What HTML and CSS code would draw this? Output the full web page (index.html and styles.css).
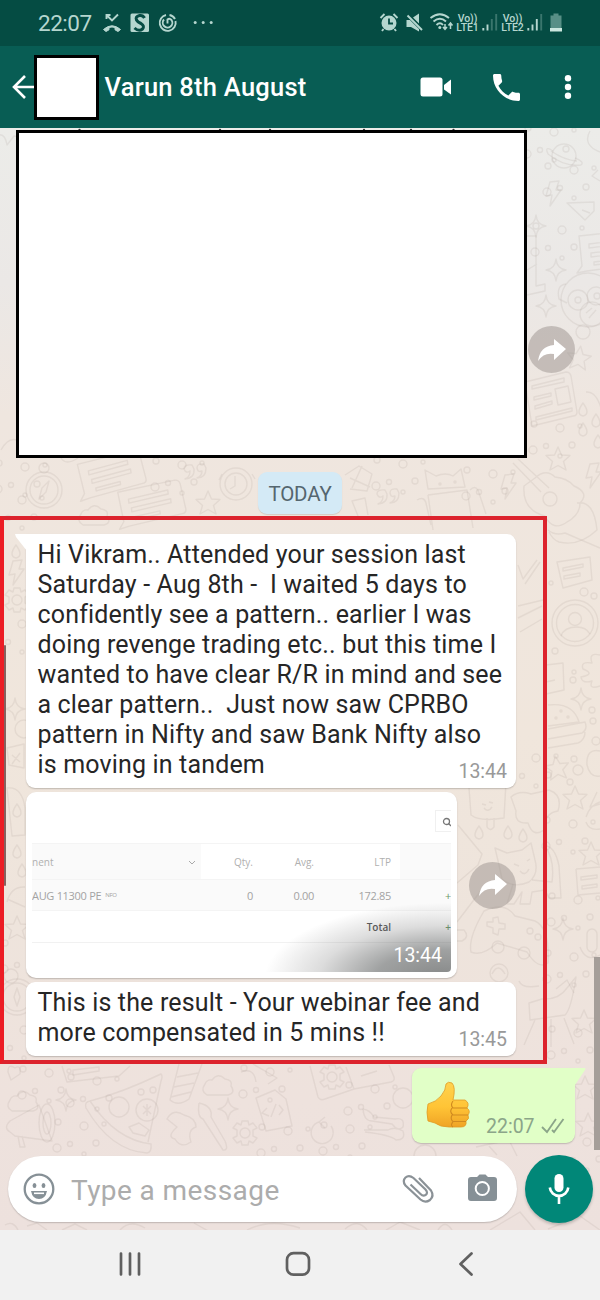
FILE: index.html
```html
<!DOCTYPE html>
<html lang="en">
<head>
<meta charset="utf-8">
<title>Varun 8th August</title>
<link rel="stylesheet" href="styles.css">
</head>
<body>
<div class="phone">
  <header class="status">
    <span class="clock">22:07</span>
    <svg class="missed" width="18" height="20" viewBox="103 13 18 20"><path d="M103.5 29.5Q112 22 120.500 29.500L118 31.500L115 29.800V27.500Q112 26.500 109 27.500V29.800L106 31.500Z" fill="currentColor" stroke="currentColor" stroke-linejoin="round"/><path d="M106.500 19V15H110.500M107 15.500L112 20.500L118 14.500" class="line"/></svg>
    <svg class="snote" width="19" height="20" viewBox="130 13 19 20"><rect x="130.500" y="13.500" width="18.500" height="18.500" rx="1.500" fill="currentColor"/><path d="M144.500 18Q143 15 139.500 15.500Q135 16.500 136.500 20Q137.500 22 141 23.500Q145 26 142.500 29Q139 32 134.500 28" fill="none" stroke="#064c44" stroke-width="3"/></svg>
    <svg class="swirl" width="18" height="20" viewBox="159 13 18 20"><g class="line"><path d="M166 15A8 8 0 1 0 175.500 21"/><path d="M169.500 15A8 8 0 0 1 175 19"/><path d="M164 19.500A4.800 4.800 0 1 0 171.500 20Q169.500 17.800 167.500 19.500V23.500"/></g></svg>
    <svg class="more" width="20" height="20" viewBox="193 13 20 20"><g fill="currentColor"><circle cx="195.200" cy="22.500" r="1.500"/><circle cx="203.200" cy="22.500" r="1.500"/><circle cx="211.200" cy="22.500" r="1.500"/></g></svg>
    <div class="radios">
      <svg width="18" height="20" viewBox="379 13 18 20"><path d="M379.500 18L383.500 14M396.500 18L392.500 14M382.500 29L381 31M393.500 29L395 31" class="line"/><circle cx="388" cy="23" r="7.500" fill="currentColor"/><path d="M388 18.500V23.500H392" fill="none" stroke="#064c44" stroke-width="1.800"/></svg>
      <svg class="mute" width="18" height="20" viewBox="405 13 18 20"><path d="M405.500 20H409L418 29V31.500L410 27H405.500Z" fill="currentColor"/><path d="M412 17.500L418 13.500V23.500Z" fill="currentColor"/><path d="M406.500 15.500L421 30" class="line"/></svg>
      <svg class="wifi" width="23" height="20" viewBox="429 13 23 20"><g class="line"><path d="M429.500 18Q439 10.500 448 18M432.500 21.500Q439 16 445 21.500M435.500 25Q439 21.500 442 25"/><path d="M444 24V29M442 27L444 29.300L446 27M449.500 29V23.500M447.500 25.500L449.500 23L451.500 25.500" stroke-width="1.500"/></g><circle cx="438.800" cy="27.500" r="1.500" fill="currentColor"/></svg>
      <span class="lte"><span>Vo))</span><span>LTE1</span></span>
      <svg class="bars" width="16" height="20" viewBox="481 13 16 20"><path d="M482.300 28V30.500M486.500 24.500V30.500" class="bar"/><path d="M490.800 19V30.500M495.200 14V30.500" class="bar dim"/></svg>
      <span class="lte"><span>Vo))</span><span>LTE2</span></span>
      <svg class="bars" width="16" height="20" viewBox="481 13 16 20"><path d="M482.300 28V30.500M486.500 24.500V30.500M490.800 19V30.500" class="bar"/><path d="M495.200 14V30.500" class="bar dim"/></svg>
      <svg class="battery" width="12" height="20" viewBox="550 13 12 20"><path d="M553.500 13.500H558.500V15.500H561.500V28H550.500V15.500H553.500Z" fill="#588f86"/><path d="M550 28H562V31.500H550Z" fill="#cce7df"/></svg>
    </div>
  </header>

  <header class="appbar">
    <svg class="back" width="22" height="26" viewBox="12 74 22 26"><path d="M34 87H14M25 76L14 87L25 98" fill="none" stroke="#fff" stroke-width="2.600"/></svg>
    <div class="avatar"></div>
    <h1 class="name">Varun 8th August</h1>
    <svg class="video" width="31" height="20" viewBox="420 77 31 20"><rect x="420.500" y="77.500" width="22" height="19" rx="2.500" fill="#fff"/><path d="M444 85L451 79.500V94.500L444 89.500Z" fill="#fff"/></svg>
    <svg class="call" width="27" height="27" viewBox="3 3 18 18"><path d="M6.620 10.790c1.440 2.830 3.760 5.140 6.590 6.590l2.200-2.200c.27-.27.67-.36 1.020-.24 1.120.37 2.330.57 3.570.57.55 0 1 .45 1 1V20c0 .55-.45 1-1 1-9.390 0-17-7.610-17-17 0-.55.45-1 1-1h3.500c.55 0 1 .45 1 1 0 1.250.2 2.450.57 3.570.11.35.03.74-.25 1.020l-2.200 2.200z" fill="#fff"/></svg>
    <svg class="menu" width="8" height="26" viewBox="564 74 8 26"><g fill="#fff"><circle cx="568" cy="78.300" r="3.200"/><circle cx="568" cy="87" r="3.200"/><circle cx="568" cy="95.700" r="3.200"/></g></svg>
  </header>

  <main class="chat">
    <svg class="wallpaper" width="600" height="1102" viewBox="0 128 600 1102">
      <defs>
        <path id="star" d="M0-12L3.500-4L12-3.500L5.500 2.500L8 11L0 6.500L-8 11L-5.500 2.500L-12-3.500L-3.500-4Z"/>
        <path id="spark" d="M0-11Q1-1 10 0Q1 1 0 11Q-1 1-10 0Q-1-1 0-11Z"/>
        <path id="cloud" d="M-11 9Q-18 5-13-2Q-11-7-6-6Q0-14 7-7Q15-6 13 0Q18 7 10 9Z"/>
        <path id="bolt" d="M-3-12L6-13L3-4L8-4L-3 12L-1 1L-7 2Z"/>
        <g id="note"><path d="M-30-14L28-20Q32-20 33-16L36 10Q36 14 32 14L-22 21L-32 23L-27 16Z"/><path d="M-20-6L20-11V-7L-20-2ZM-18 3L22-2V2L-18 7ZM-15 12L10 9V12L-15 15Z"/></g>
        <g id="gear"><path d="M-3-12H3L4-8L8-10L12-5L8-3V3L12 5L8 10L4 8L3 12H-3L-4 8L-8 10L-12 5L-8 3V-3L-12-5L-8-10L-4-8Z"/><circle r="5"/></g>
        <g id="compass"><circle r="18"/><circle r="14"/><circle cy="-22" r="5"/><path d="M5-9L2 2L-5 9L-2-2Z"/></g>
        <path id="drop" d="M0-7Q8 4 0 6Q-8 4 0-7Z"/>
        <path id="quote" d="M-3-6Q-11-7-11-2Q-9 3-5 0Q-5 6-10 8Q0 7-1-2ZM9-7Q2-8 2-3Q3 2 7 0Q7 5 2 7Q11 7 11-3Z"/>
        <g id="planet"><circle r="12"/><path d="M-11-5Q-20-11-16-2Q0 11 17 9Q21 6 11 2M-13-5Q0 4 13 5"/></g>
        <g id="person"><circle r="23"/><circle r="18.500"/><circle cy="-4" r="6.500"/><path d="M-14 13Q-11 4 2 4Q11 4 15 11"/></g>
        <g id="dots"><circle cx="-22" cy="-12" r="3"/><circle cx="-10" cy="10" r="2.500"/><circle cx="4" cy="-8" r="4"/><circle cx="16" cy="9" r="3"/><circle cx="24" cy="-10" r="2"/><circle cx="-23" cy="14" r="4"/><circle cx="4" cy="20" r="2"/></g>
        <g id="cat"><path d="M-18-3L-22-20L-10-15L5-18L14-25L18-8Q22 6 12 14Q-4 21-15 11Z"/><path d="M15 12L35 14Q38-8 28-22Q38-22 42-2L44 30H32L28 22L15 24L13 36H3L5 24L-3 36H-10L-4 16M-3-4L2-2M10-7L13-9M3 3Q8 9 12 1"/></g>
        <g id="pad"><path d="M-21-25Q0-35 10-20L30-15Q45-8 43 27Q33 34 22 16L-8 7Q-23 21-34 16Q-37 2-21-25Z"/><path d="M-12-18L-7-19L-6-13L0-12V-7L-6-7L-7-1L-12-3V-8L-18-10V-14L-12-14Z"/><circle cx="-7" cy="11" r="6"/><circle cx="19" cy="17" r="6"/><circle cx="25" cy="-5" r="3"/><circle cx="33" cy="1" r="3"/></g>
      </defs>
      <g class="doodle">
        <use href="#planet" x="564" y="156"/><use href="#bolt" x="553" y="194"/><path d="M567 203L594 202V211L585 220Z M582 210L590 213M598 170L592 176L600 181"/>
        <use href="#spark" x="536" y="226"/><use href="#spark" x="556" y="270"/><use href="#spark" x="546" y="306"/>
        <use href="#dots" x="550" y="140"/><use href="#dots" x="558" y="238"/><use href="#dots" x="570" y="178"/>
        <use href="#note" x="609" y="250"/><circle cx="588" cy="300" r="27"/><circle cx="578" cy="300" r="10"/><circle cx="596" cy="296" r="9"/><circle cx="578" cy="300" r="3"/><circle cx="597" cy="296" r="3"/><circle cx="592" cy="314" r="12"/><circle cx="583" cy="332" r="7"/><path d="M566 284Q556 285 559 299L567 303M586 313L592 308M589 318L596 310"/>
        <path d="M527 236H536V286L545 284V291L527 295M527 270L537 264M590 131Q582 145 600 152"/>
        <use href="#star" x="579" y="358" transform="rotate(8 579 358)"/><path d="M525 382L566 372Q570 372 571 376L577 412Q577 416 573 416L532 426ZM532 386L564 378V382L532 389ZM534 397L551 393V396L534 400ZM535 406L552 401V404L535 409ZM536 417L572 408V411L536 420ZM555 389L568 386L571 402L558 405Z"/>
        <use href="#drop" x="583" y="410"/><use href="#drop" x="583" y="430"/><use href="#drop" x="596" y="421"/><use href="#drop" x="598" y="442"/><path d="M586 392Q596 391 601 408"/><use href="#dots" x="556" y="436"/>
        <use href="#compass" x="44" y="490"/><use href="#dots" x="21" y="475"/><use href="#dots" x="18" y="508"/><use href="#note" x="109" y="474" transform="rotate(-8 109 474)"/><use href="#note" x="149" y="503" transform="rotate(-6 149 503)"/><use href="#quote" x="195" y="471"/><use href="#star" x="208" y="503"/><circle cx="236" cy="484" r="16"/><circle cx="236" cy="484" r="11"/><path d="M235 476V486L230 489M222 474L219 480M252 474L255 479"/><use href="#cloud" x="94" y="516"/><use href="#dots" x="178" y="473"/>
        <path d="M1 450Q8 437 17 440M61 458Q66 466 78 458M-2 135Q5 133 7 145L14 136L24 138"/>
        <path d="M345 475L359 466L372 474L367 491L350 489M350 478L370 487M352 488L362 466"/><use href="#dots" x="399" y="472"/><use href="#quote" x="388" y="496"/>
        <path d="M428 489L425 470L436 476Q446 472 453 476L461 469L465 487ZM428 495L467 490L473 528M428 495L433 530M417 500Q424 496 426 503L431 525M470 490Q475 485 478 490L486 514M358 516L352 501L365 498L368 515"/><circle cx="440" cy="484" r="1"/><circle cx="455" cy="482" r="1"/>
        <use href="#bolt" x="508" y="487"/><path d="M513 463L541 492M518 459L549 488M524 486Q522 510 545 516Q553 532 567 522Q580 515 580 503Q590 493 574 486Q567 478 555 477Q546 468 535 478ZM577 503Q594 500 597 530Q579 547 559 542Q553 540 549 532"/><circle cx="550" cy="499" r="7"/><use href="#dots" x="489" y="482"/>
        <use href="#star" x="558" y="459"/><use href="#bolt" x="593" y="476"/>
        <path d="M557 562L590 557L592 580L563 588ZM563 568L583 564V567L563 571ZM564 576L580 573V576L564 579Z"/><circle cx="584" cy="592" r="4"/><circle cx="594" cy="596" r="3"/><circle cx="551" cy="583" r="2"/><circle cx="555" cy="651" r="3"/><use href="#person" x="575" y="623"/>
        <path d="M548 530Q555 536 565 533L600 548M518 565L523 579L537 560M525 584L540 562M518 606L543 600M518 618L542 606M520 632L542 619M546 665L563 663L564 690L546 694M546 682L555 680M600 655Q588 652 592 663Q580 661 583 669Q596 674 581 677Q582 684 592 681Q588 690 600 686"/>
        <use href="#spark" x="581" y="699"/><circle cx="573" cy="680" r="3"/><circle cx="574" cy="672" r="2"/><circle cx="592" cy="710" r="3"/><circle cx="593" cy="721" r="3"/><circle cx="596" cy="741" r="4"/>
        <path d="M548 705Q573 702 579 722L548 726M548 729L585 722Q588 729 582 733L548 739M548 748L578 743Q585 740 585 732M600 751Q586 748 587 765Q590 778 600 776"/><circle cx="561" cy="711" r="1"/><circle cx="568" cy="717" r="1"/><circle cx="556" cy="718" r="1"/>
        <use href="#star" x="557" y="768" transform="rotate(-8 557 768)"/><circle cx="578" cy="770" r="5"/><circle cx="574" cy="759" r="3"/><circle cx="570" cy="782" r="3"/><use href="#dots" x="532" y="766"/>
        <use href="#drop" x="16" y="552"/><use href="#gear" x="17" y="600"/><use href="#bolt" x="16" y="573"/><use href="#dots" x="18" y="632"/><use href="#spark" x="15" y="709"/><circle cx="24" cy="729" r="9"/><path d="M7 748L24 744V768L9 765ZM12 755L20 762M20 753L12 764M7 788Q22 786 25 808V835L12 836Z"/><use href="#drop" x="17" y="811"/><use href="#drop" x="17" y="852"/><use href="#drop" x="22" y="871"/><path d="M7 902Q11 886 25 887M7 899L25 907"/><use href="#star" x="17" y="928"/><use href="#dots" x="27" y="955"/><circle cx="11" cy="976" r="7"/><circle cx="17" cy="997" r="18"/><circle cx="17" cy="997" r="14"/><path d="M17 988L20 997L17 1006L14 997Z"/><use href="#dots" x="20" y="1038"/>
        <path d="M469 788L471 815Q480 822 504 818L506 782M487 818V827Q490 832 494 827V818M482 804L486 805M489 802L493 803M484 808Q488 813 492 807M511 797Q519 790 531 794L549 790Q563 795 558 811Q544 813 544 830Q533 838 528 823Q514 824 516 811Z"/><use href="#star" x="575" y="798"/><path d="M597 792L590 807L600 804M586 817Q590 805 600 802M586 822Q589 831 600 829"/>
        <use href="#drop" x="479" y="833"/><use href="#drop" x="508" y="833"/><use href="#drop" x="523" y="836"/><use href="#dots" x="569" y="832"/><use href="#star" x="591" y="854"/><use href="#cat" x="517" y="868"/><path d="M457 883L478 865L482 854L458 825M457 922L483 888M457 930H464Q470 937 462 941H457M576 869L600 867M576 869L578 895L600 893M581 877L597 875V878L581 880ZM582 886L597 884V887L582 889Z"/>
        <use href="#dots" x="574" y="908"/><use href="#pad" x="505" y="936"/><use href="#spark" x="563" y="929"/><rect x="587" y="929" width="10" height="23" rx="5"/><path d="M580 947Q586 963 600 955"/><use href="#dots" x="570" y="965"/><circle cx="499" cy="973" r="9"/><path d="M492 974Q498 962 505 974M519 981Q522 989 539 986M556 989L567 980L574 993"/>
        <path d="M529 1003L542 999Q559 1000 567 988L576 977Q571 1010 565 1015L530 1020ZM535 1020L524 1045M551 1019V1047M564 1018L574 1044"/><use href="#star" x="584" y="1022"/><use href="#dots" x="574" y="1041"/><use href="#star" x="585" y="1088"/><use href="#star" x="588" y="1125"/><use href="#dots" x="583" y="1150"/>
        <path d="M8 1072Q8 1063 15 1068Q21 1064 20 1074L11 1080Z"/><use href="#cloud" x="23" y="1102"/><path d="M10 1132Q3 1128 10 1121L39 1105L52 1141L15 1136ZM18 1136L20 1147L25 1147L22 1136"/><ellipse cx="47" cy="1123" rx="8" ry="19"/><ellipse cx="47" cy="1123" rx="4" ry="11"/><use href="#dots" x="45" y="1081"/><use href="#dots" x="80" y="1134"/><use href="#dots" x="93" y="1089"/>
        <path d="M62 1066L67 1082L119 1076L130 1066M73 1070L99 1067V1071L73 1075ZM90 1101Q121 1093 161 1074Q163 1076 161 1081L148 1142M90 1101Q84 1102 86 1108Q111 1151 147 1153Q152 1152 151 1144Q116 1140 90 1101M129 1127L139 1123L149 1130L145 1136L133 1133Z"/><circle cx="119" cy="1107" r="10"/><circle cx="147" cy="1110" r="11"/><circle cx="141" cy="1092" r="3"/><circle cx="153" cy="1090" r="3"/><path d="M143 1106L151 1114M151 1106L143 1114M147 1104V1116"/>
        <use href="#spark" x="66" y="1100"/><path d="M179 1064L170 1100Q178 1107 189 1099L202 1064M177 1077L198 1073M174 1087L194 1083M171 1097L191 1092M167 1119Q173 1108 184 1115Q196 1118 196 1127Q187 1130 191 1142Q181 1149 175 1139Q166 1137 177 1127ZM199 1103Q213 1106 211 1117L225 1141Q229 1151 223 1150L203 1119Q197 1117 199 1103"/><use href="#cloud" x="218" y="1086"/><use href="#spark" x="228" y="1109"/><use href="#gear" x="245" y="1133"/>
        <path d="M256 1098L275 1090L286 1099L292 1126L266 1131ZM267 1108L262 1113L269 1116M279 1105L283 1110L279 1115M276 1104L271 1117M241 1072Q254 1067 256 1082M253 1064L277 1078L268 1084"/><use href="#dots" x="266" y="1080"/><use href="#dots" x="284" y="1139"/><use href="#gear" x="332" y="1077"/>
        <path d="M310 1066L318 1097Q320 1101 325 1099L354 1089L391 1082Q395 1081 394 1077L389 1065M346 1067L354 1089M361 1076L377 1071M363 1109Q370 1110 374 1117L395 1119Q405 1117 403 1127Q398 1132 392 1124L372 1121Q364 1121 363 1109M364 1130L388 1130Q395 1126 403 1131Q406 1140 396 1140Q391 1135 365 1132M319 1122A11 11 0 1 0 331 1126M319 1122L325 1117M319 1122L325 1128"/><circle cx="403" cy="1098" r="10"/><use href="#dots" x="371" y="1097"/><use href="#dots" x="346" y="1137"/><circle cx="425" cy="1156" r="11"/><path d="M476 1147L509 1140L517 1156M489 1146L497 1155"/>
        <path d="M5 1225Q13 1220 18 1230M27 1226L37 1223L47 1230M62 1230L75 1224L87 1230M120 1230Q130 1219 145 1228M194 1223L210 1232M247 1230Q270 1218 300 1228M345 1229Q358 1218 367 1230M386 1230L400 1222L420 1230M438 1230Q445 1219 452 1230M490 1230L520 1212L535 1230M548 1229L580 1216L600 1230"/>
      </g>
      <g class="ticks"><circle cx="79.500" cy="130" r="1.200"/><circle cx="220" cy="130" r="1.200"/><circle cx="270" cy="130" r="1.200"/><circle cx="364" cy="130" r="1.200"/><circle cx="411" cy="130" r="1.200"/><circle cx="453.500" cy="130" r="1.200"/></g>
    </svg>

    <div class="covered-row">
      <div class="covered"></div>
      <div class="forward"><svg width="30" height="24" viewBox="0 0 30 24"><path d="M17 1L29 11L17 22V16Q7 14 1 23Q3 8 17 7Z" fill="#fff"/></svg></div>
    </div>
    <div class="day">TODAY</div>

    <section class="highlight">
      <div class="bubble first">
        <svg class="tail" width="12" height="17" viewBox="0 0 12 17"><path d="M0 0H12V17L1 3Z" fill="#fff"/></svg>
        <p>Hi Vikram.. Attended your session last
Saturday - Aug 8th -  I waited 5 days to
confidently see a pattern.. earlier I was
doing revenge trading etc.. but this time I
wanted to have clear R/R in mind and see
a clear pattern..  Just now saw CPRBO
pattern in Nifty and saw Bank Nifty also</p>
        <div class="ending"><p>is moving in tandem</p><time>13:44</time></div>
      </div>
      <div class="photo-row">
        <div class="photo">
          <div class="shot">
            <div class="search"><svg width="10" height="10" viewBox="0 0 10 10"><circle cx="4.500" cy="4.500" r="3" fill="none" stroke="#777" stroke-width="1.300"/><path d="M6.500 6.500L9 9" stroke="#777" stroke-width="1.300"/></svg></div>
            <div class="tr head"><span class="inst">nent<svg width="8" height="5" viewBox="0 0 8 5"><path d="M1 1L4 4L7 1" fill="none" stroke="#aaa"/></svg></span><span class="w">Qty.</span><span class="w">Avg.</span><span class="w ltp">LTP</span><span></span></div>
            <div class="tr row"><span class="inst">AUG 11300 PE <small>NFO</small></span><span>0</span><span>0.00</span><span class="ltp">172.85</span><span class="plus">+</span></div>
            <div class="tr total"><span></span><span></span><span></span><span class="ltp">Total</span><span class="plus">+</span></div>
            <div class="rest"></div>
            <time>13:44</time>
          </div>
        </div>
        <div class="forward"><svg width="30" height="24" viewBox="0 0 30 24"><path d="M17 1L29 11L17 22V16Q7 14 1 23Q3 8 17 7Z" fill="#fff"/></svg></div>
      </div>
      <div class="bubble last">
        <p>This is the result - Your webinar fee and</p>
        <div class="ending"><p>more compensated in 5 mins !!</p><time>13:45</time></div>
      </div>
    </section>

    <div class="bubble sent">
      <svg class="tail" width="12" height="18" viewBox="0 0 12 18"><path d="M0 0H11Q12 1 11 2L1 17H0Z" fill="#e1ffc7"/></svg>
      <svg class="thumb" width="44" height="48" viewBox="426 1081 44 48">
        <defs><linearGradient id="skin" x1="0" y1="0" x2="0" y2="1"><stop offset="0" stop-color="#ffd24f"/><stop offset=".55" stop-color="#ffc436"/><stop offset="1" stop-color="#efa325"/></linearGradient></defs>
        <path d="M428 1104Q436 1102 441 1096Q446 1090 446 1084Q448 1081 452 1083Q456 1087 453 1100L465 1100Q470 1103 467 1108Q471 1111 468 1115Q470 1119 466 1121Q467 1127 461 1127H449Q440 1127 435 1123L428 1121Q426 1112 428 1104Z" fill="url(#skin)" stroke="#e09a25" stroke-width=".8"/>
        <path d="M453 1101Q450 1105 453 1108H467M452 1108Q449 1112 453 1115H468M452 1115Q450 1119 453 1121.500H466M453 1122Q450 1125 453 1127" fill="none" stroke="#d08a20" stroke-width="1.100"/>
      </svg>
      <time>22:07</time>
      <svg class="checks" width="24" height="17" viewBox="541 1117 24 17"><path d="M542 1127L547 1132L556 1119M552 1130L554 1132L563.500 1119" fill="none" stroke="#8ba589" stroke-width="1.800"/></svg>
    </div>

    <footer class="composer">
      <div class="field">
        <svg class="smile" width="32" height="32" viewBox="23 1173 32 32"><circle cx="39" cy="1189" r="14.300" fill="none" stroke="#869096" stroke-width="2.300"/><ellipse cx="34.500" cy="1185.500" rx="1.900" ry="2.600" fill="#869096"/><ellipse cx="43.500" cy="1185.500" rx="1.900" ry="2.600" fill="#869096"/><path d="M31 1191H47Q45.500 1199 39 1199Q32.500 1199 31 1191Z" fill="#869096"/><path d="M34 1193.300H44" stroke="#fff" stroke-width="1.600"/></svg>
        <span class="hint">Type a message</span>
        <svg class="clip" width="32" height="30" viewBox="402 1174 32 30"><path d="M419 1178L431 1190.500Q434.500 1196 430 1200Q425 1203.500 420.500 1199.500L405.500 1185.500Q402 1181 405.500 1177.500Q409 1174.500 413.500 1178L425.500 1189.500Q428.500 1193 425.500 1195Q423 1196.500 420.500 1194L410.500 1184.500" fill="none" stroke="#8b9297" stroke-width="2.200"/></svg>
        <svg class="camera" width="30" height="28" viewBox="467 1173 30 28"><path d="M471 1177H477L479.500 1174.500H485.500L488 1177H494Q497 1177 497 1180V1198Q497 1201 494 1201H471Q468 1201 468 1198V1180Q468 1177 471 1177Z" fill="#869096"/><circle cx="482.300" cy="1188.500" r="6.600" fill="#869096" stroke="#fff" stroke-width="2"/></svg>
      </div>
      <div class="mic"><svg width="22" height="32" viewBox="548 1173 22 32"><rect x="554.500" y="1174" width="9" height="18" rx="4.500" fill="#fff"/><path d="M549.800 1187.500A9.300 9.300 0 0 0 568.300 1187.500M559 1197V1204" fill="none" stroke="#fff" stroke-width="2.600"/></svg></div>
    </footer>
    <div class="scrollbar"></div>
    <div class="edge"></div>
  </main>

  <nav class="nav">
    <svg width="24" height="24" viewBox="118 1252 24 24"><path d="M121 1253.500V1274.500M130 1253.500V1274.500M139 1253.500V1274.500" class="key"/></svg>
    <svg width="26" height="24" viewBox="287 1252 26 24"><rect x="287" y="1253.200" width="22" height="21.500" rx="6.500" class="key"/></svg>
    <svg width="16" height="24" viewBox="458 1252 16 24"><path d="M471.500 1253.500L460.500 1264L471.500 1274.500" class="key"/></svg>
  </nav>
</div>
</body>
</html>
```
FILE: styles.css
```css
* { box-sizing: border-box; }
body { margin: 0; font-family: Roboto, "Liberation Sans", sans-serif; }
svg { display: block; flex: none; overflow: visible; }
.phone { width: 600px; height: 1300px; display: flex; flex-direction: column; overflow: hidden; }

.status { height: 46px; background: #054c43; color: #b5d6cf; display: flex; align-items: center; padding: 0 38px; flex: none; }
.clock { font-size: 22.5px; width: 65px; letter-spacing: -0.5px; }
.line { fill: none; stroke: currentColor; stroke-width: 1.9; }
.snote { margin-left: 9px; }
.swirl { margin-left: 10px; }
.more { margin-left: 16px; }
.radios { display: flex; align-items: center; margin-left: auto; }
.mute { margin-left: 8px; }
.wifi { margin-left: 6px; }
.lte { display: flex; flex-direction: column; width: 23px; margin-left: 3px; font-size: 10.5px; line-height: 9.5px; font-weight: 500; align-items: center; letter-spacing: -0.1px; white-space: nowrap; }
.bars { margin-left: 3px; }
.bar { stroke: currentColor; stroke-width: 1.9; }
.dim { opacity: .3; }
.battery { margin-left: 7px; }

.appbar { height: 82px; background: #085d54; display: flex; align-items: center; padding: 0 28px 0 12px; flex: none; }
.avatar { width: 65px; height: 65px; background: #fff; border: 3px solid #000; margin-top: 1px; }
.name { margin: 0 0 0 5.5px; color: #fff; font-size: 25.5px; font-weight: 500; flex: 1; white-space: nowrap; letter-spacing: 0.25px; }
.call { margin-left: 42px; }
.menu { margin-left: 44px; }

.chat { position: relative; height: 1102px; flex: none; display: flex; flex-direction: column; background: linear-gradient(#ecece9 0, #ebe8e6 14%, #efe6df 26%, #f0e6dc 55%, #eee4dc 72%, #eee2dd 88%, #ede1dd 100%); }
.wallpaper { position: absolute; left: 0; top: 0; overflow: hidden; }
.doodle { fill: none; stroke: #9c8f86; stroke-opacity: .14; stroke-width: 1.4; stroke-linejoin: round; }
.ticks { fill: #333; }
.covered-row { position: relative; display: flex; align-items: center; padding: 2px 0 0 16px; height: 330px; }
.covered { width: 511px; height: 328px; background: #fff; border: 3px solid #000; }
.forward { width: 47px; height: 47px; border-radius: 50%; background: rgba(151, 143, 138, .48); display: flex; align-items: center; justify-content: center; flex: none; }
.covered-row .forward { margin: 111px 0 0 1px; }
.day { position: relative; width: 84px; height: 42px; margin: 14px 0 2px 258px; border-radius: 9px; background: #d4eaf6; color: #55666f; font-size: 20.5px; letter-spacing: -0.2px; line-height: 44px; text-align: center; box-shadow: 0 1px 1px rgba(0, 0, 0, .12); }

.highlight { position: relative; width: 547px; height: 548px; border: 4px solid #dc232d; border-left-color: #ec1c24; padding: 14px 0 0 22px; display: flex; flex-direction: column; gap: 4px; flex: none; }
.bubble { position: relative; background: #fff; border-radius: 9px; box-shadow: 0 1px 1.5px rgba(0, 0, 0, .2); width: 490px; padding: 6px 9px 0 11.5px; }
.bubble p { margin: 0; font-size: 25px; line-height: 30px; color: #262626; white-space: pre; letter-spacing: 0.16px; }
.bubble time { font-size: 19.5px; line-height: 24px; color: #999; }
.ending { display: flex; justify-content: space-between; align-items: flex-start; }
.ending time { margin-top: 10px; }
.first { height: 254px; border-top-left-radius: 0; }
.first .tail { position: absolute; left: -11px; top: 0; }
.last { height: 74px; }

.photo-row { display: flex; align-items: center; gap: 12px; height: 186px; }
.photo { width: 431px; height: 186px; padding: 6px; background: #fff; border-radius: 10px; box-shadow: 0 1px 1.5px rgba(0, 0, 0, .2); }
.shot { position: relative; height: 174px; border-radius: 4px; overflow: hidden; display: flex; flex-direction: column; color: #b0b0b0; font: 10px "Open Sans", sans-serif; }
.shot::after { content: ""; position: absolute; inset: 0; background: radial-gradient(ellipse 178px 76px at 98% 104%, rgba(75, 78, 78, .68) 0, rgba(85, 88, 88, .56) 38%, rgba(110, 110, 110, .24) 70%, rgba(255, 255, 255, 0) 100%); }
.search { width: 16px; height: 22px; margin: 12px 0 11px auto; border: 1px solid #f0f0f0; border-right: 0; padding: 6px 0 0 6px; }
.tr { display: grid; grid-template-columns: 169px 52px 61px 86px 51px; height: 36px; align-items: stretch; line-height: 36px; text-align: right; background: #fafafa; border-top: 1px solid #f4f4f4; }
.tr .inst { text-align: left; display: flex; align-items: center; }
.head .inst { justify-content: space-between; padding-right: 5px; }
.w { background: #fff; }
.tr .ltp { padding-right: 9px; }
.row { height: 31px; line-height: 31px; font-size: 11px; letter-spacing: -0.3px; color: #a3a3a3; }
.row small { font-size: 6px; margin-left: 4px; }
.total { height: 32px; line-height: 32px; background: #fff; color: #555; font-weight: 600; }
.plus { color: #6a9a6a; }
.rest { flex: 1; border-top: 1px solid #f1f1f1; }
.shot time { position: absolute; z-index: 1; right: 9px; bottom: 4px; color: #fff; font: 19.5px/24px Roboto, sans-serif; }

.sent { width: 163px; height: 75px; margin: 4px 0 13px 412px; padding: 0; background: #e1ffc7; border-top-right-radius: 0; flex: none; display: flex; }
.sent .tail { position: absolute; left: 162px; top: 0; }
.thumb { margin: 13px 0 0 14px; }
.sent time { margin: 47px 0 0 16px; width: 49px; color: #8ba589; }
.checks { margin: 49px 0 0 6px; }

.composer { position: relative; display: flex; align-items: center; gap: 8px; padding-left: 8px; height: 66px; flex: none; }
.field { width: 509px; height: 66px; background: #fff; border-radius: 33px; display: flex; align-items: center; padding: 0 20px 0 15px; box-shadow: 0 1px 1.5px rgba(0, 0, 0, .2); }
.hint { flex: 1; margin: 3px 0 0 16px; font-size: 28px; letter-spacing: 0.42px; color: #acacac; white-space: nowrap; }
.camera { margin: -4px 0 0 33px; }
.mic { width: 68px; height: 68px; border-radius: 50%; background: #018778; display: flex; align-items: center; justify-content: center; flex: none; box-shadow: 0 2px 3px rgba(0, 0, 0, .2); }
.scrollbar { position: absolute; right: 0; top: 829px; width: 6px; height: 193px; background: #a59e99; }
.edge { position: absolute; left: 4px; top: 517px; width: 2px; height: 241px; background: #85625f; border-radius: 1px; }

.nav { height: 70px; background: #f1f1f1; display: flex; align-items: center; padding: 0 126px 2px 118px; justify-content: space-between; flex: none; }
.key { fill: none; stroke: #606060; stroke-width: 2.7; stroke-linecap: round; stroke-linejoin: round; }
```
